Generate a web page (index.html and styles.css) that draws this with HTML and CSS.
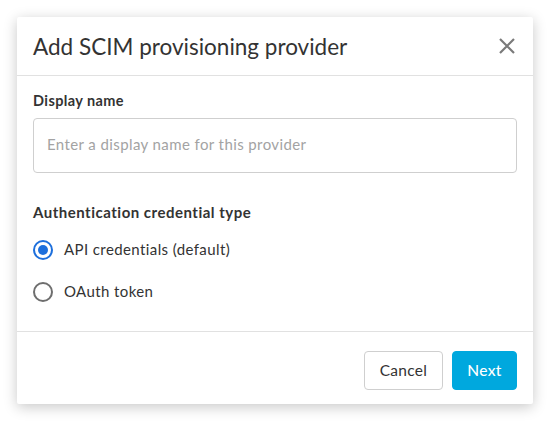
FILE: index.html
```html
<!DOCTYPE html>
<html>
<head>
<meta charset="utf-8">
<link rel="stylesheet" href="styles.css">
</head>
<body>
<div class="modal">
  <div class="modal-header">
    <h1 class="modal-title">Add SCIM provisioning provider</h1>
    <button class="close" aria-label="Close">
      <svg width="18" height="18" viewBox="0 0 18 18"><path d="M2 2 L16 16 M16 2 L2 16" stroke="#7a7a7a" stroke-width="2.2" stroke-linecap="butt"/></svg>
    </button>
  </div>
  <div class="modal-body">
    <label class="field-label" for="dn">Display name</label>
    <input id="dn" class="text-input" type="text" placeholder="Enter a display name for this provider">
    <div class="group-label">Authentication credential type</div>
    <div class="radio-list">
      <label class="radio-row"><span class="radio checked"></span><span class="radio-text">API credentials (default)</span></label>
      <label class="radio-row"><span class="radio"></span><span class="radio-text">OAuth token</span></label>
    </div>
  </div>
  <div class="modal-footer">
    <button class="btn btn-secondary">Cancel</button>
    <button class="btn btn-primary">Next</button>
  </div>
</div>
</body>
</html>
```

FILE: styles.css
```css
* { box-sizing: border-box; }
html, body { margin: 0; padding: 0; background: #fff; }
body {
  padding: 17px;
  font-family: "Lato", "Open Sans", sans-serif;
  color: #333;
}
.modal {
  width: 516px;
  height: 387px;
  background: #fff;
  border-radius: 2px;
  box-shadow: 0 3px 14px rgba(0,0,0,0.22);
  display: flex;
  flex-direction: column;
}
.modal-header {
  height: 59px;
  border-bottom: 1px solid #e1e1e1;
  display: flex;
  align-items: center;
  justify-content: space-between;
  padding: 0 17px 0 16px;
}
.modal-title {
  margin: 0;
  font-size: 22.5px;
  font-weight: 400;
  color: #333;
}
.close {
  border: 0;
  background: none;
  padding: 0;
  width: 18px;
  height: 18px;
  display: flex;
}
.modal-body {
  flex: 1;
  padding: 15px 16px 0 16px;
  display: flex;
  flex-direction: column;
}
.field-label {
  font-size: 14.5px;
  font-weight: 700;
  line-height: 20px;
  letter-spacing: 0.4px;
  color: #333;
}
.text-input {
  margin-top: 7px;
  height: 55px;
  width: 100%;
  border: 1px solid #cfcfcf;
  border-radius: 4px;
  padding: 0 13px 3px 13px;
  font-family: inherit;
  font-size: 15px;
  letter-spacing: 0.4px;
  color: #333;
  outline: none;
}
.text-input::placeholder { color: #a3a3a3; }
.group-label {
  margin-top: 29px;
  font-size: 15px;
  font-weight: 700;
  line-height: 20px;
  letter-spacing: 0.5px;
  color: #333;
}
.radio-list {
  margin-top: 18px;
  display: flex;
  flex-direction: column;
  gap: 22px;
}
.radio-row {
  display: flex;
  align-items: center;
  gap: 11px;
  height: 20px;
  font-size: 15px;
  letter-spacing: 0.4px;
  color: #333;
}
.radio-text { padding-bottom: 2px; }
.radio {
  width: 20px;
  height: 20px;
  border-radius: 50%;
  border: 2px solid #6e6e6e;
  display: flex;
  align-items: center;
  justify-content: center;
  flex: none;
}
.radio.checked { border-color: #1d6fdc; }
.radio.checked::after {
  content: "";
  width: 10px;
  height: 10px;
  border-radius: 50%;
  background: #1d6fdc;
}
.modal-footer {
  border-top: 1px solid #e1e1e1;
  height: 73px;
  display: flex;
  justify-content: flex-end;
  gap: 9px;
  padding: 19px 16px 0 16px;
}
.btn {
  height: 39px;
  border-radius: 4px;
  font-family: inherit;
  font-size: 15.5px;
  letter-spacing: 0.3px;
  padding: 0 0 2px 0;
}
.btn-secondary {
  width: 79px;
  background: #fff;
  border: 1px solid #cfcfcf;
  color: #333;
}
.btn-primary {
  width: 65px;
  background: #00a8de;
  border: 1px solid #00a8de;
  color: #fff;
  font-weight: 500;
}
```
